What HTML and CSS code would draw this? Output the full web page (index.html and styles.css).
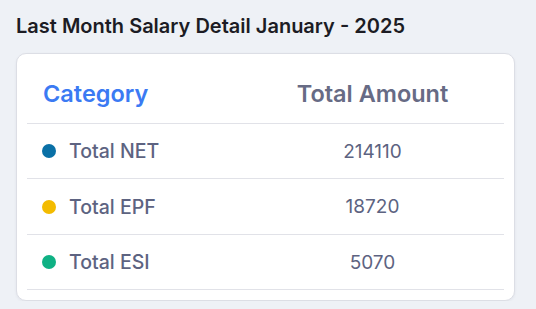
FILE: index.html
```html
<!DOCTYPE html>
<html>
<head>
<meta charset="utf-8">
<link rel="stylesheet" href="styles.css">
</head>
<body>
<div class="page">
  <h2 class="title">Last Month Salary Detail January - 2025</h2>
  <div class="card">
    <div class="table">
      <div class="row head">
        <div class="cell cat">Category</div>
        <div class="cell amt">Total Amount</div>
      </div>
      <div class="row">
        <div class="cell label"><span class="dot net"></span>Total NET</div>
        <div class="cell num">214110</div>
      </div>
      <div class="row tall">
        <div class="cell label"><span class="dot epf"></span>Total EPF</div>
        <div class="cell num">18720</div>
      </div>
      <div class="row">
        <div class="cell label"><span class="dot esi"></span>Total ESI</div>
        <div class="cell num">5070</div>
      </div>
    </div>
  </div>
</div>
</body>
</html>
```
FILE: styles.css
```css
html, body {
  margin: 0;
  padding: 0;
  background: #eef1f6;
  font-family: Inter, "Noto Sans", sans-serif;
}
.page {
  padding: 13px 21px 0 16px;
}
.title {
  margin: 0 0 14px 0;
  font-size: 20px;
  font-weight: 600;
  color: #1c1c24;
  line-height: 26px;
}
.card {
  background: #ffffff;
  border: 1px solid #dcdee5;
  border-radius: 10px;
  box-shadow: 0 1px 3px rgba(30, 40, 70, 0.06);
  padding: 10px 10px 10px 10px;
}
.row {
  display: grid;
  grid-template-columns: 214px 1fr;
  align-items: center;
  height: 54px;
  border-bottom: 1px solid #e1e2e8;
}
.row.tall {
  height: 55px;
}
.row.head {
  height: 59px;
}
.cell.cat {
  padding-left: 16px;
  font-size: 23.5px;
  font-weight: 600;
  color: #3b7af3;
}
.cell.amt {
  text-align: center;
  font-size: 23.5px;
  font-weight: 600;
  color: #676b85;
}
.cell.label {
  display: flex;
  align-items: center;
  padding-left: 15px;
  font-size: 19.5px;
  font-weight: 500;
  color: #5d6381;
}
.dot {
  width: 14px;
  height: 14px;
  border-radius: 50%;
  margin-right: 13px;
  flex: none;
}
.dot.net { background: #0a70a6; }
.dot.epf { background: #f3bb00; }
.dot.esi { background: #0fb184; }
.cell.num {
  text-align: center;
  font-size: 19px;
  font-weight: 400;
  color: #5d6381;
}
```
